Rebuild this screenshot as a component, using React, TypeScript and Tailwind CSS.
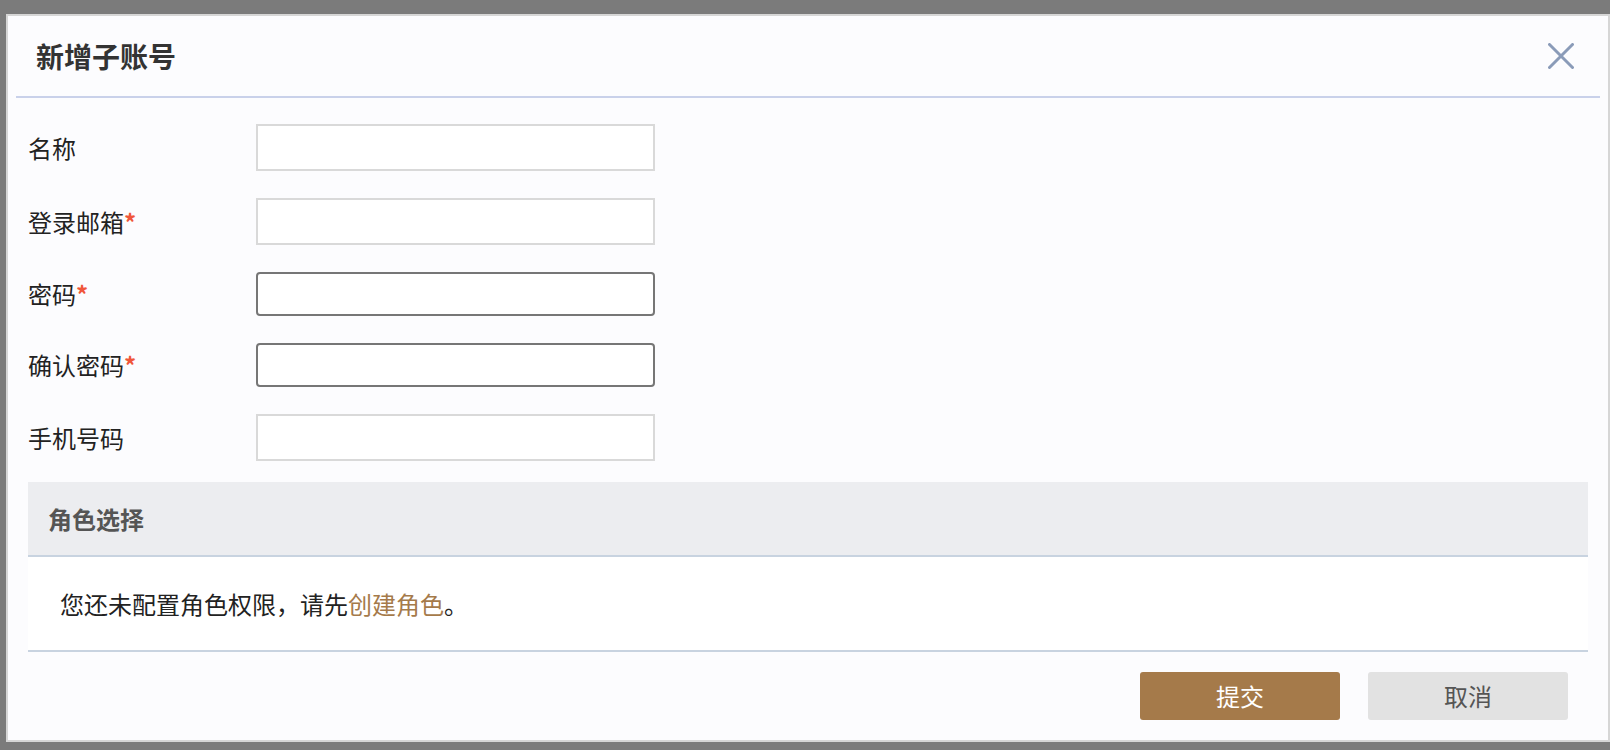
import React from "react";

const font = { fontFamily: '"Noto Sans CJK SC", "Noto Sans", sans-serif' };

function Field({ label, required, dark }: { label: string; required?: boolean; dark?: boolean }) {
  return (
    <div className="flex items-center">
      <div className="w-[228px] text-[24px] leading-none text-[#222]">
        {label}
        {required && <span className="text-[#f0563a] font-bold">*</span>}
      </div>
      {dark ? (
        <input
          type="password"
          className="w-[399px] h-[44px] bg-white border-2 border-[#767676] rounded-[4px] outline-none"
        />
      ) : (
        <input
          type="text"
          className="w-[399px] h-[47px] bg-white border-2 border-[#d9d9d9] outline-none"
        />
      )}
    </div>
  );
}

export default function App() {
  return (
    <div className="w-[1610px] h-[750px] bg-[#7b7b7b] pt-[14px] pl-[6px] overflow-hidden" style={font}>
      <div className="w-[1604px] h-[728px] border-2 border-[#d6d6d6] bg-[#fcfcfe] flex flex-col">
        <div className="h-[80px] flex items-center justify-between pl-[28px] pr-[34px]">
          <div className="text-[28px] font-bold text-[#333] leading-none">新增子账号</div>
          <svg width="26" height="26" viewBox="0 0 26 26">
            <path d="M1.5 1.5 L24.5 24.5 M24.5 1.5 L1.5 24.5" stroke="#8a9bb8" strokeWidth="3" strokeLinecap="round" />
          </svg>
        </div>
        <div className="mx-[8px] h-[2px] bg-[#c9d1ea]" />
        <div className="pt-[26px] px-[20px] flex flex-col gap-[27px]">
          <Field label="名称" />
          <Field label="登录邮箱" required />
          <Field label="密码" required dark />
          <Field label="确认密码" required dark />
          <Field label="手机号码" />
        </div>
        <div className="mx-[20px] mt-[21px]">
          <div className="h-[75px] bg-[#ecedf0] flex items-center pl-[20px] text-[24px] font-bold text-[#555] border-b-2 border-[#c8d3e0]">
            角色选择
          </div>
          <div className="h-[95px] bg-white flex items-center pl-[32px] text-[24px] text-[#222] border-b-2 border-[#c8d3e0]">
            您还未配置角色权限，请先<span className="text-[#a57a4a]">创建角色</span>。
          </div>
        </div>
        <div className="flex justify-end gap-[28px] pr-[40px] pt-[20px]">
          <button className="w-[200px] h-[48px] rounded-[3px] bg-[#a57a4a] text-white text-[24px]">提交</button>
          <button className="w-[200px] h-[48px] rounded-[3px] bg-[#e2e2e2] text-[#555] text-[24px]">取消</button>
        </div>
      </div>
    </div>
  );
}
